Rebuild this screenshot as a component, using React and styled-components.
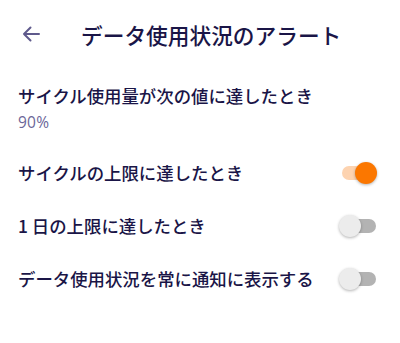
import React, { useState } from 'react';
import styled, { createGlobalStyle } from 'styled-components';

const GlobalStyle = createGlobalStyle`
  body {
    margin: 0;
    background: #ffffff;
    font-family: 'Noto Sans CJK JP', 'Noto Sans', sans-serif;
  }
`;

const Screen = styled.div`
  width: 400px;
  min-height: 343px;
  background: #ffffff;
`;

const Header = styled.header`
  height: 68px;
  display: flex;
  align-items: center;
  padding-left: 22px;
  gap: 41px;
`;

const BackButton = styled.button`
  border: none;
  background: none;
  padding: 0;
  width: 18px;
  height: 16px;
  display: flex;
  color: #5f5a8c;
  cursor: pointer;
`;

const Title = styled.h1`
  margin: 0;
  font-size: 21.7px;
  font-weight: 500;
  color: #1a1547;
  letter-spacing: 0;
`;

const Summary = styled.div`
  padding: 16px 18px 0;
`;

const RowLabel = styled.div`
  font-size: 17.4px;
  line-height: 24px;
  font-weight: 500;
  color: #1a1547;
`;

const SubValue = styled.div`
  margin-top: 4px;
  font-family: 'Open Sans', 'Roboto', sans-serif;
  font-size: 15.5px;
  line-height: 20px;
  letter-spacing: 0.2px;
  color: #6b6698;
`;

const List = styled.div`
  margin-top: 14px;
`;

const ToggleRow = styled.label`
  height: 53px;
  display: flex;
  align-items: center;
  justify-content: space-between;
  padding: 0 24px 0 18px;
  cursor: pointer;
`;

const Track = styled.span`
  position: relative;
  width: 34px;
  height: 14px;
  border-radius: 7px;
  background: ${p => (p.$on ? '#fdd3b0' : '#b3b3b3')};
  flex-shrink: 0;
`;

const Thumb = styled.span`
  position: absolute;
  top: -4px;
  left: ${p => (p.$on ? '13px' : '-3px')};
  width: 22px;
  height: 22px;
  border-radius: 50%;
  background: ${p => (p.$on ? '#fb7700' : '#ececec')};
  box-shadow: 0 1px 3px rgba(0, 0, 0, 0.3);
`;

function Switch({ on, onToggle }) {
  return (
    <Track $on={on} onClick={onToggle}>
      <Thumb $on={on} />
    </Track>
  );
}

const items = [
  { id: 'cycle', label: 'サイクルの上限に達したとき', on: true },
  { id: 'daily', label: '1 日の上限に達したとき', on: false },
  { id: 'notify', label: 'データ使用状況を常に通知に表示する', on: false },
];

export default function App() {
  const [state, setState] = useState(
    Object.fromEntries(items.map(i => [i.id, i.on]))
  );

  return (
    <Screen>
      <GlobalStyle />
      <Header>
        <BackButton aria-label="戻る">
          <svg width="18" height="16" viewBox="0 0 18 16" fill="none">
            <path
              d="M17 8H2M8.5 1.5L2 8l6.5 6.5"
              stroke="currentColor"
              strokeWidth="2"
              strokeLinecap="round"
              strokeLinejoin="round"
            />
          </svg>
        </BackButton>
        <Title>データ使用状況のアラート</Title>
      </Header>
      <Summary>
        <RowLabel>サイクル使用量が次の値に達したとき</RowLabel>
        <SubValue>90%</SubValue>
      </Summary>
      <List>
        {items.map(item => (
          <ToggleRow key={item.id}>
            <RowLabel>{item.label}</RowLabel>
            <Switch
              on={state[item.id]}
              onToggle={() => setState(s => ({ ...s, [item.id]: !s[item.id] }))}
            />
          </ToggleRow>
        ))}
      </List>
    </Screen>
  );
}
